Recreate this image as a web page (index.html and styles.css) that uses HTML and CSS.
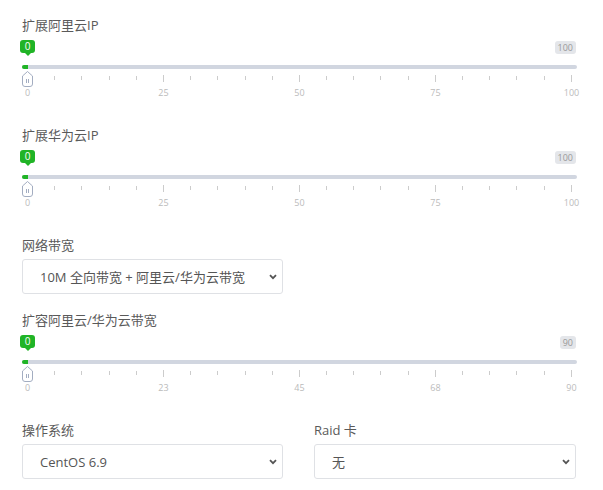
FILE: index.html
```html
<!DOCTYPE html>
<html lang="zh-CN">
<head>
<meta charset="UTF-8" />
<title>配置</title>
<link rel="stylesheet" href="styles.css">
</head>
<body>

<div class="form">

  <div class="field">
    <label class="field-label">扩展阿里云IP</label>
    <div class="irs">
      <span class="irs-line"></span>
      <span class="irs-bar"></span>
      <span class="irs-single">0</span>
      <span class="irs-max">100</span>
      <div class="irs-grid">
        <i class="big"></i><i></i><i></i><i></i><i></i>
        <i class="big"></i><i></i><i></i><i></i><i></i>
        <i class="big"></i><i></i><i></i><i></i><i></i>
        <i class="big"></i><i></i><i></i><i></i><i></i>
        <i class="big"></i>
      </div>
      <div class="irs-grid-text"><span>0</span><span>25</span><span>50</span><span>75</span><span>100</span></div>
      <svg class="irs-handle" width="11" height="16" viewBox="0 0 11 16">
        <path d="M0.5 5 L5.5 0.5 L10.5 5 V13 Q10.5 15.5 8 15.5 H3 Q0.5 15.5 0.5 13 Z" fill="#fff" stroke="#a3adc1"/>
        <path d="M4.5 8 V12 M6.5 8 V12" stroke="#a3adc1"/>
      </svg>
    </div>
  </div>

  <div class="field">
    <label class="field-label">扩展华为云IP</label>
    <div class="irs">
      <span class="irs-line"></span>
      <span class="irs-bar"></span>
      <span class="irs-single">0</span>
      <span class="irs-max">100</span>
      <div class="irs-grid">
        <i class="big"></i><i></i><i></i><i></i><i></i>
        <i class="big"></i><i></i><i></i><i></i><i></i>
        <i class="big"></i><i></i><i></i><i></i><i></i>
        <i class="big"></i><i></i><i></i><i></i><i></i>
        <i class="big"></i>
      </div>
      <div class="irs-grid-text"><span>0</span><span>25</span><span>50</span><span>75</span><span>100</span></div>
      <svg class="irs-handle" width="11" height="16" viewBox="0 0 11 16">
        <path d="M0.5 5 L5.5 0.5 L10.5 5 V13 Q10.5 15.5 8 15.5 H3 Q0.5 15.5 0.5 13 Z" fill="#fff" stroke="#a3adc1"/>
        <path d="M4.5 8 V12 M6.5 8 V12" stroke="#a3adc1"/>
      </svg>
    </div>
  </div>

  <div class="field field-select">
    <label class="field-label">网络带宽</label>
    <div class="select-wrap half">
      <select class="select">
        <option>10M 全向带宽 + 阿里云/华为云带宽</option>
      </select>
      <svg class="chevron" width="8" height="6" viewBox="0 0 8 6"><path d="M1 1.2 L4 4.2 L7 1.2" fill="none" stroke="#555" stroke-width="1.8"/></svg>
    </div>
  </div>

  <div class="field">
    <label class="field-label">扩容阿里云/华为云带宽</label>
    <div class="irs">
      <span class="irs-line"></span>
      <span class="irs-bar"></span>
      <span class="irs-single">0</span>
      <span class="irs-max">90</span>
      <div class="irs-grid">
        <i class="big"></i><i></i><i></i><i></i><i></i>
        <i class="big"></i><i></i><i></i><i></i><i></i>
        <i class="big"></i><i></i><i></i><i></i><i></i>
        <i class="big"></i><i></i><i></i><i></i><i></i>
        <i class="big"></i>
      </div>
      <div class="irs-grid-text"><span>0</span><span>23</span><span>45</span><span>68</span><span>90</span></div>
      <svg class="irs-handle" width="11" height="16" viewBox="0 0 11 16">
        <path d="M0.5 5 L5.5 0.5 L10.5 5 V13 Q10.5 15.5 8 15.5 H3 Q0.5 15.5 0.5 13 Z" fill="#fff" stroke="#a3adc1"/>
        <path d="M4.5 8 V12 M6.5 8 V12" stroke="#a3adc1"/>
      </svg>
    </div>
  </div>

  <div class="row">
    <div class="field-select">
      <label class="field-label">操作系统</label>
      <div class="select-wrap">
        <select class="select">
          <option>CentOS 6.9</option>
        </select>
        <svg class="chevron" width="8" height="6" viewBox="0 0 8 6"><path d="M1 1.2 L4 4.2 L7 1.2" fill="none" stroke="#555" stroke-width="1.8"/></svg>
      </div>
    </div>
    <div class="field-select">
      <label class="field-label">Raid 卡</label>
      <div class="select-wrap">
        <select class="select">
          <option>无</option>
        </select>
        <svg class="chevron" width="8" height="6" viewBox="0 0 8 6"><path d="M1 1.2 L4 4.2 L7 1.2" fill="none" stroke="#555" stroke-width="1.8"/></svg>
      </div>
    </div>
  </div>

</div>

</body>
</html>
```

FILE: styles.css
```css
body { margin: 0; background: #fff; font-family: 'Open Sans', 'Noto Sans CJK SC', sans-serif; color: #555; }
.form { width: 555px; padding: 16px 0 0 22px; }
.field { margin-bottom: 27px; }
.field.field-select { margin-bottom: 17px; }
.field-label { display: block; font-size: 13px; line-height: 18px; color: #5a5a5a; }

/* range slider */
.irs { position: relative; height: 65px; }
.irs-line { position: absolute; left: 0; top: 31px; width: 555px; height: 4px; background: #d1d6e0; border-radius: 3px; }
.irs-bar { position: absolute; left: 0; top: 31px; width: 6px; height: 4px; background: #20b426; border-radius: 3px 0 0 3px; }
.irs-single { position: absolute; left: -2px; top: 6px; width: 15px; height: 13px; background: #20b426; color: #fff; font-size: 10px; line-height: 13px; text-align: center; border-radius: 3px; }
.irs-single::after { content: ''; position: absolute; left: 50%; margin-left: -3px; bottom: -3px; border: 3px solid transparent; border-bottom: 0; border-top-color: #20b426; }
.irs-max { position: absolute; right: 1px; top: 7px; height: 13px; padding: 0 3px; background: #e4e6ea; color: #999; font-size: 9px; line-height: 13px; border-radius: 3px; }
.irs-grid { position: absolute; left: 5px; top: 42px; width: 545px; display: flex; justify-content: space-between; align-items: flex-start; }
.irs-grid i { display: block; width: 1px; height: 4px; background: #ccc; }
.irs-grid i.big { height: 7px; margin-top: -1px; }
.irs-grid-text { position: absolute; left: 5px; top: 53px; width: 545px; display: flex; justify-content: space-between; }
.irs-grid-text span { width: 1px; display: flex; justify-content: center; white-space: nowrap; font-size: 9px; line-height: 12px; color: #bbb; }
.irs-handle { position: absolute; left: 0; top: 37px; display: block; }

/* selects */
.select-wrap { position: relative; margin-top: 5px; }
.select-wrap.half { width: 261px; }
.select { display: block; width: 100%; height: 35px; margin: 0; padding: 0 30px 0 17px; border: 1px solid #dfe1e5; border-radius: 3px; background: #fff; color: #555; font-family: inherit; font-size: 13px; -webkit-appearance: none; appearance: none; }
.chevron { position: absolute; right: 6px; top: 15px; pointer-events: none; }
.row { display: grid; grid-template-columns: 261px 262px; column-gap: 31px; }
```
